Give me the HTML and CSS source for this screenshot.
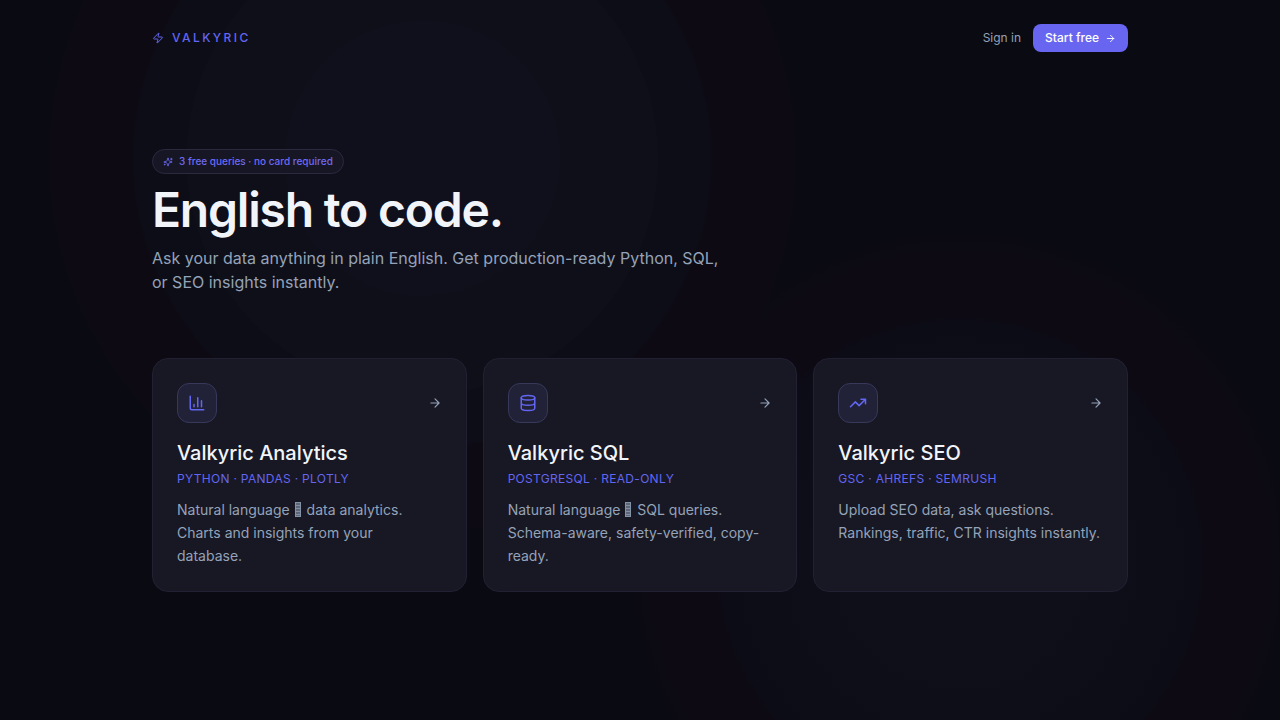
FILE: index.html
```html
<!DOCTYPE html>
<html lang="en">
<head>
<meta charset="utf-8">
<meta name="viewport" content="width=device-width, initial-scale=1">
<title>Valkyric</title>
<link rel="stylesheet" href="styles.css">
</head>
<body>
<div class="page">
  <header class="topbar">
    <a class="brand" href="#">
      <svg class="icon icon-brand" viewBox="0 0 24 24" aria-hidden="true"><path d="M4 14a1 1 0 0 1-.78-1.63l9.9-10.2a.5.5 0 0 1 .86.46l-1.92 6.02A1 1 0 0 0 13 10h7a1 1 0 0 1 .78 1.63l-9.9 10.2a.5.5 0 0 1-.86-.46l1.92-6.02A1 1 0 0 0 11 14z"/></svg>
      <span>VALKYRIC</span>
    </a>
    <nav class="actions">
      <a class="signin" href="#">Sign in</a>
      <button class="start" type="button">Start free
        <svg class="icon icon-go" viewBox="0 0 24 24" aria-hidden="true"><path d="M5 12h14M12 5l7 7-7 7"/></svg>
      </button>
    </nav>
  </header>
  <main>
    <section class="hero">
      <p class="pill">
        <svg class="icon icon-small" viewBox="0 0 24 24" aria-hidden="true"><path d="M9.94 15.5A2 2 0 0 0 8.5 14.06l-6.14-1.58a.5.5 0 0 1 0-.96L8.5 9.94A2 2 0 0 0 9.94 8.5l1.58-6.14a.5.5 0 0 1 .96 0l1.58 6.14a2 2 0 0 0 1.44 1.44l6.14 1.58a.5.5 0 0 1 0 .96l-6.14 1.58a2 2 0 0 0-1.44 1.44l-1.58 6.14a.5.5 0 0 1-.96 0zM20 3v4M22 5h-4M4 17v2M5 18H3"/></svg>
        <span>3 free queries · no card required</span>
      </p>
      <h1 class="headline">English to code.</h1>
      <p class="lead">Ask your data anything in plain English. Get production-ready Python, SQL, or SEO insights instantly.</p>
    </section>
    <section class="cards">
      <a class="card" href="#">
        <span class="card-top">
          <span class="tile"><svg class="icon icon-tile" viewBox="0 0 24 24" aria-hidden="true"><path d="M3 3v16a2 2 0 0 0 2 2h16M18 17V9M13 17V5M8 17v-3"/></svg></span>
          <svg class="icon icon-arrow" viewBox="0 0 24 24" aria-hidden="true"><path d="M5 12h14M12 5l7 7-7 7"/></svg>
        </span>
        <h2 class="card-title">Valkyric Analytics</h2>
        <p class="tags">PYTHON · PANDAS · PLOTLY</p>
        <p class="desc">Natural language <span class="missing-glyph"></span> data analytics. Charts and insights from your database.</p>
      </a>
      <a class="card" href="#">
        <span class="card-top">
          <span class="tile"><svg class="icon icon-tile" viewBox="0 0 24 24" aria-hidden="true"><ellipse cx="12" cy="5" rx="9" ry="3"/><path d="M3 5v14a9 3 0 0 0 18 0V5M3 12a9 3 0 0 0 18 0"/></svg></span>
          <svg class="icon icon-arrow" viewBox="0 0 24 24" aria-hidden="true"><path d="M5 12h14M12 5l7 7-7 7"/></svg>
        </span>
        <h2 class="card-title">Valkyric SQL</h2>
        <p class="tags">POSTGRESQL · READ-ONLY</p>
        <p class="desc">Natural language <span class="missing-glyph"></span> SQL queries. Schema-aware, safety-verified, copy-ready.</p>
      </a>
      <a class="card" href="#">
        <span class="card-top">
          <span class="tile"><svg class="icon icon-tile" viewBox="0 0 24 24" aria-hidden="true"><path d="m22 7-8.5 8.5-5-5L2 17M16 7h6v6"/></svg></span>
          <svg class="icon icon-arrow" viewBox="0 0 24 24" aria-hidden="true"><path d="M5 12h14M12 5l7 7-7 7"/></svg>
        </span>
        <h2 class="card-title">Valkyric SEO</h2>
        <p class="tags">GSC · AHREFS · SEMRUSH</p>
        <p class="desc">Upload SEO data, ask questions. Rankings, traffic, CTR insights instantly.</p>
      </a>
    </section>
  </main>
</div>
</body>
</html>
```
FILE: styles.css
```css
* { box-sizing: border-box; margin: 0; padding: 0; }

body {
  min-height: 100vh;
  background:
    radial-gradient(circle at 33% 22%, #10101c 137px, #0f0f1a 138px, #0f0f1a 235px, #0d0d17 236px, #0d0d17 288px, #0d0a13 290px, #0d0a13 372px, transparent 375px),
    radial-gradient(circle at 75% 78%, #0f0f1a 100px, #0c0c16 240px, #0d0a13 245px, #0d0a13 310px, transparent 340px),
    #090a12;
  color: #f1f5f9;
  font-family: Inter, "Liberation Sans", sans-serif;
}

a { color: inherit; text-decoration: none; }

.page { max-width: 1024px; margin: 0 auto; padding: 0 24px; }

.icon {
  flex: none;
  fill: none;
  stroke: currentColor;
  stroke-width: 2;
  stroke-linecap: round;
  stroke-linejoin: round;
}
.icon-small { width: 10px; height: 10px; }
.icon-go { width: 11px; height: 11px; }
.icon-brand { width: 12px; height: 12px; }
.icon-arrow { width: 14px; height: 14px; color: #94a3b8; }
.icon-tile { width: 18px; height: 18px; }

.topbar {
  display: flex;
  align-items: center;
  justify-content: space-between;
  padding: 24px 0;
}
.brand {
  display: flex;
  align-items: center;
  gap: 8px;
  color: #6366f1;
  font-size: 12px;
  font-weight: 500;
  line-height: 16px;
  letter-spacing: 0.2em;
}
.actions { display: flex; align-items: center; gap: 12px; font-size: 12px; line-height: 16px; }
.signin { color: #94a3b8; }
.start {
  display: flex;
  align-items: center;
  gap: 6px;
  padding: 6px 12px;
  border: 0;
  border-radius: 8px;
  background: #6866f1;
  color: #fff;
  font: 500 12px/16px Inter, "Liberation Sans", sans-serif;
}

.hero { padding-top: 73px; }
.pill {
  display: flex;
  align-items: center;
  gap: 6px;
  width: fit-content;
  padding: 4px 10px;
  border: 1px solid #2a2940;
  border-radius: 999px;
  background: #171624;
  color: #6d6bf3;
  font-size: 10px;
  font-weight: 500;
  line-height: 15px;
}
.headline {
  margin-top: 12px;
  font-size: 48px;
  font-weight: 600;
  line-height: 48px;
  letter-spacing: -0.025em;
}
.lead {
  max-width: 576px;
  margin-top: 12px;
  color: #94a3b8;
  font-size: 16px;
  line-height: 24px;
}

.cards {
  display: grid;
  grid-template-columns: repeat(auto-fit, minmax(280px, 1fr));
  gap: 16px;
  padding: 64px 0;
}
.card {
  padding: 24px;
  border: 1px solid #222133;
  border-radius: 16px;
  background: #181724;
}
.card-top { display: flex; align-items: center; justify-content: space-between; }
.tile {
  display: grid;
  place-items: center;
  width: 40px;
  height: 40px;
  border: 1px solid #37385a;
  border-radius: 12px;
  background: #212237;
  color: #6366f1;
}
.card-title { margin-top: 16px; font-size: 20px; font-weight: 500; line-height: 28px; }
.tags { margin-top: 4px; color: #6366f1; font-size: 12px; line-height: 16px; letter-spacing: 0.025em; }
.desc { margin-top: 12px; color: #94a3b8; font-size: 14px; line-height: 1.625; }

/* Narrow box standing for a character that has no glyph */
.missing-glyph {
  display: inline-block;
  width: 6px;
  height: 15px;
  margin: 0 2px 0 1px;
  border: 1px solid #8492a6;
  background: repeating-linear-gradient(#5c6678 0 2px, #8490a2 2px 3px);
  vertical-align: -2px;
}
```
